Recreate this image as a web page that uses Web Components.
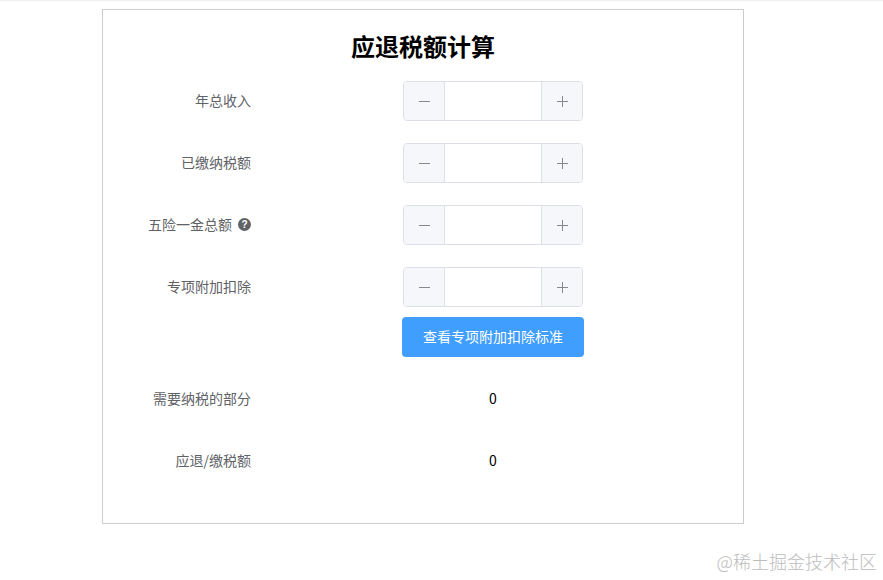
<!DOCTYPE html>
<html lang="zh-CN">
<head>
<meta charset="utf-8">
<title>应退税额计算</title>
<style>
  html, body { margin: 0; background: #fff; }
  body {
    min-height: 579px;
    border-top: 1px solid #eee;
    font-family: "Noto Sans CJK SC", "Liberation Sans", sans-serif;
    overflow: hidden;
    position: relative;
  }
</style>
</head>
<body>
<tax-card heading="应退税额计算">
  <form-row label="年总收入"><number-stepper></number-stepper></form-row>
  <form-row label="已缴纳税额"><number-stepper></number-stepper></form-row>
  <form-row label="五险一金总额"><help-icon slot="hint"></help-icon><number-stepper></number-stepper></form-row>
  <form-row label="专项附加扣除" tight><number-stepper></number-stepper></form-row>
  <form-row><tax-button>查看专项附加扣除标准</tax-button></form-row>
  <form-row label="需要纳税的部分">0</form-row>
  <form-row label="应退/缴税额">0</form-row>
</tax-card>
<site-mark>@稀土掘金技术社区</site-mark>

<script>
class TaxCard extends HTMLElement {
  constructor() {
    super();
    this.attachShadow({ mode: 'open' }).innerHTML = `
      <style>
        :host {
          display: block;
          box-sizing: border-box;
          width: 642px;
          height: 515px;
          margin: 8px 0 0 102px;
          border: 1px solid #ccc;
          background: #fff;
        }
        h2 {
          margin: 0;
          padding-top: 18px;
          height: 53px;
          font-size: 24px;
          line-height: 36px;
          font-weight: 700;
          text-align: center;
          color: #000;
        }
      </style>
      <h2></h2>
      <slot></slot>
    `;
    this.shadowRoot.querySelector('h2').textContent = this.getAttribute('heading');
  }
}

class FormRow extends HTMLElement {
  constructor() {
    super();
    this.attachShadow({ mode: 'open' }).innerHTML = `
      <style>
        :host {
          display: grid;
          grid-template-columns: 160px 460px;
          margin-bottom: 22px;
          min-height: 40px;
          font-size: 14px;
          line-height: 38px;
          color: #000;
        }
        :host([tight]) { margin-bottom: 10px; }
        .label {
          display: flex;
          box-sizing: border-box;
          justify-content: flex-end;
          align-items: center;
          gap: 6px;
          align-self: start;
          height: 40px;
          padding: 0 12px 2px 0;
          color: #606266;
        }
        .content {
          display: flex;
          justify-content: center;
        }
      </style>
      <div class="label"><span></span><slot name="hint"></slot></div>
      <div class="content"><slot></slot></div>
    `;
    this.shadowRoot.querySelector('.label span').textContent = this.getAttribute('label') || '';
  }
}

class NumberStepper extends HTMLElement {
  constructor() {
    super();
    this.attachShadow({ mode: 'open' }).innerHTML = `
      <style>
        :host {
          display: flex;
          box-sizing: border-box;
          width: 180px;
          height: 40px;
          border: 1px solid #dcdfe6;
          border-radius: 4px;
          overflow: hidden;
          background: #fff;
        }
        .step {
          flex: none;
          width: 40px;
          display: grid;
          place-items: center;
          background: #f5f7fa;
          color: #85888e;
        }
        .minus { border-right: 1px solid #dcdfe6; }
        .plus { border-left: 1px solid #dcdfe6; }
        svg { display: block; }
        input {
          flex: 1;
          min-width: 0;
          border: 0;
          outline: 0;
          padding: 0;
          background: transparent;
          text-align: center;
        }
      </style>
      <div class="step minus" role="button" aria-label="减少">
        <svg width="13" height="13" viewBox="0 0 13 13"><path d="M1 6.5h11" stroke="currentColor" fill="none"/></svg>
      </div>
      <input type="text" aria-label="数值">
      <div class="step plus" role="button" aria-label="增加">
        <svg width="13" height="13" viewBox="0 0 13 13"><path d="M1 6.5h11M6.5 1v11" stroke="currentColor" fill="none"/></svg>
      </div>
    `;
  }
}

class TaxButton extends HTMLElement {
  constructor() {
    super();
    this.attachShadow({ mode: 'open' }).innerHTML = `
      <style>
        :host {
          display: block;
          box-sizing: border-box;
          width: 182px;
          height: 40px;
          border-radius: 4px;
          background: #409eff;
          color: #fff;
          font-size: 14px;
          line-height: 38px;
          text-align: center;
          white-space: nowrap;
        }
      </style>
      <slot></slot>
    `;
  }
}

class HelpIcon extends HTMLElement {
  constructor() {
    super();
    this.attachShadow({ mode: 'open' }).innerHTML = `
      <style>
        :host {
          display: grid;
          place-items: center;
          width: 13px;
          height: 13px;
          border-radius: 50%;
          background: #606266;
          color: #fff;
          font: 700 10px/13px "Liberation Sans", sans-serif;
        }
      </style>
      ?
    `;
  }
}

class SiteMark extends HTMLElement {
  constructor() {
    super();
    this.attachShadow({ mode: 'open' }).innerHTML = `
      <style>
        :host {
          position: absolute;
          right: 6px;
          bottom: 6px;
          font-family: "Noto Sans CJK SC", sans-serif;
          font-size: 18px;
          font-weight: 300;
          line-height: 26px;
          color: #bcbcbc;
          white-space: nowrap;
        }
      </style>
      <slot></slot>
    `;
  }
}

customElements.define('tax-card', TaxCard);
customElements.define('form-row', FormRow);
customElements.define('number-stepper', NumberStepper);
customElements.define('tax-button', TaxButton);
customElements.define('help-icon', HelpIcon);
customElements.define('site-mark', SiteMark);
</script>
</body>
</html>
